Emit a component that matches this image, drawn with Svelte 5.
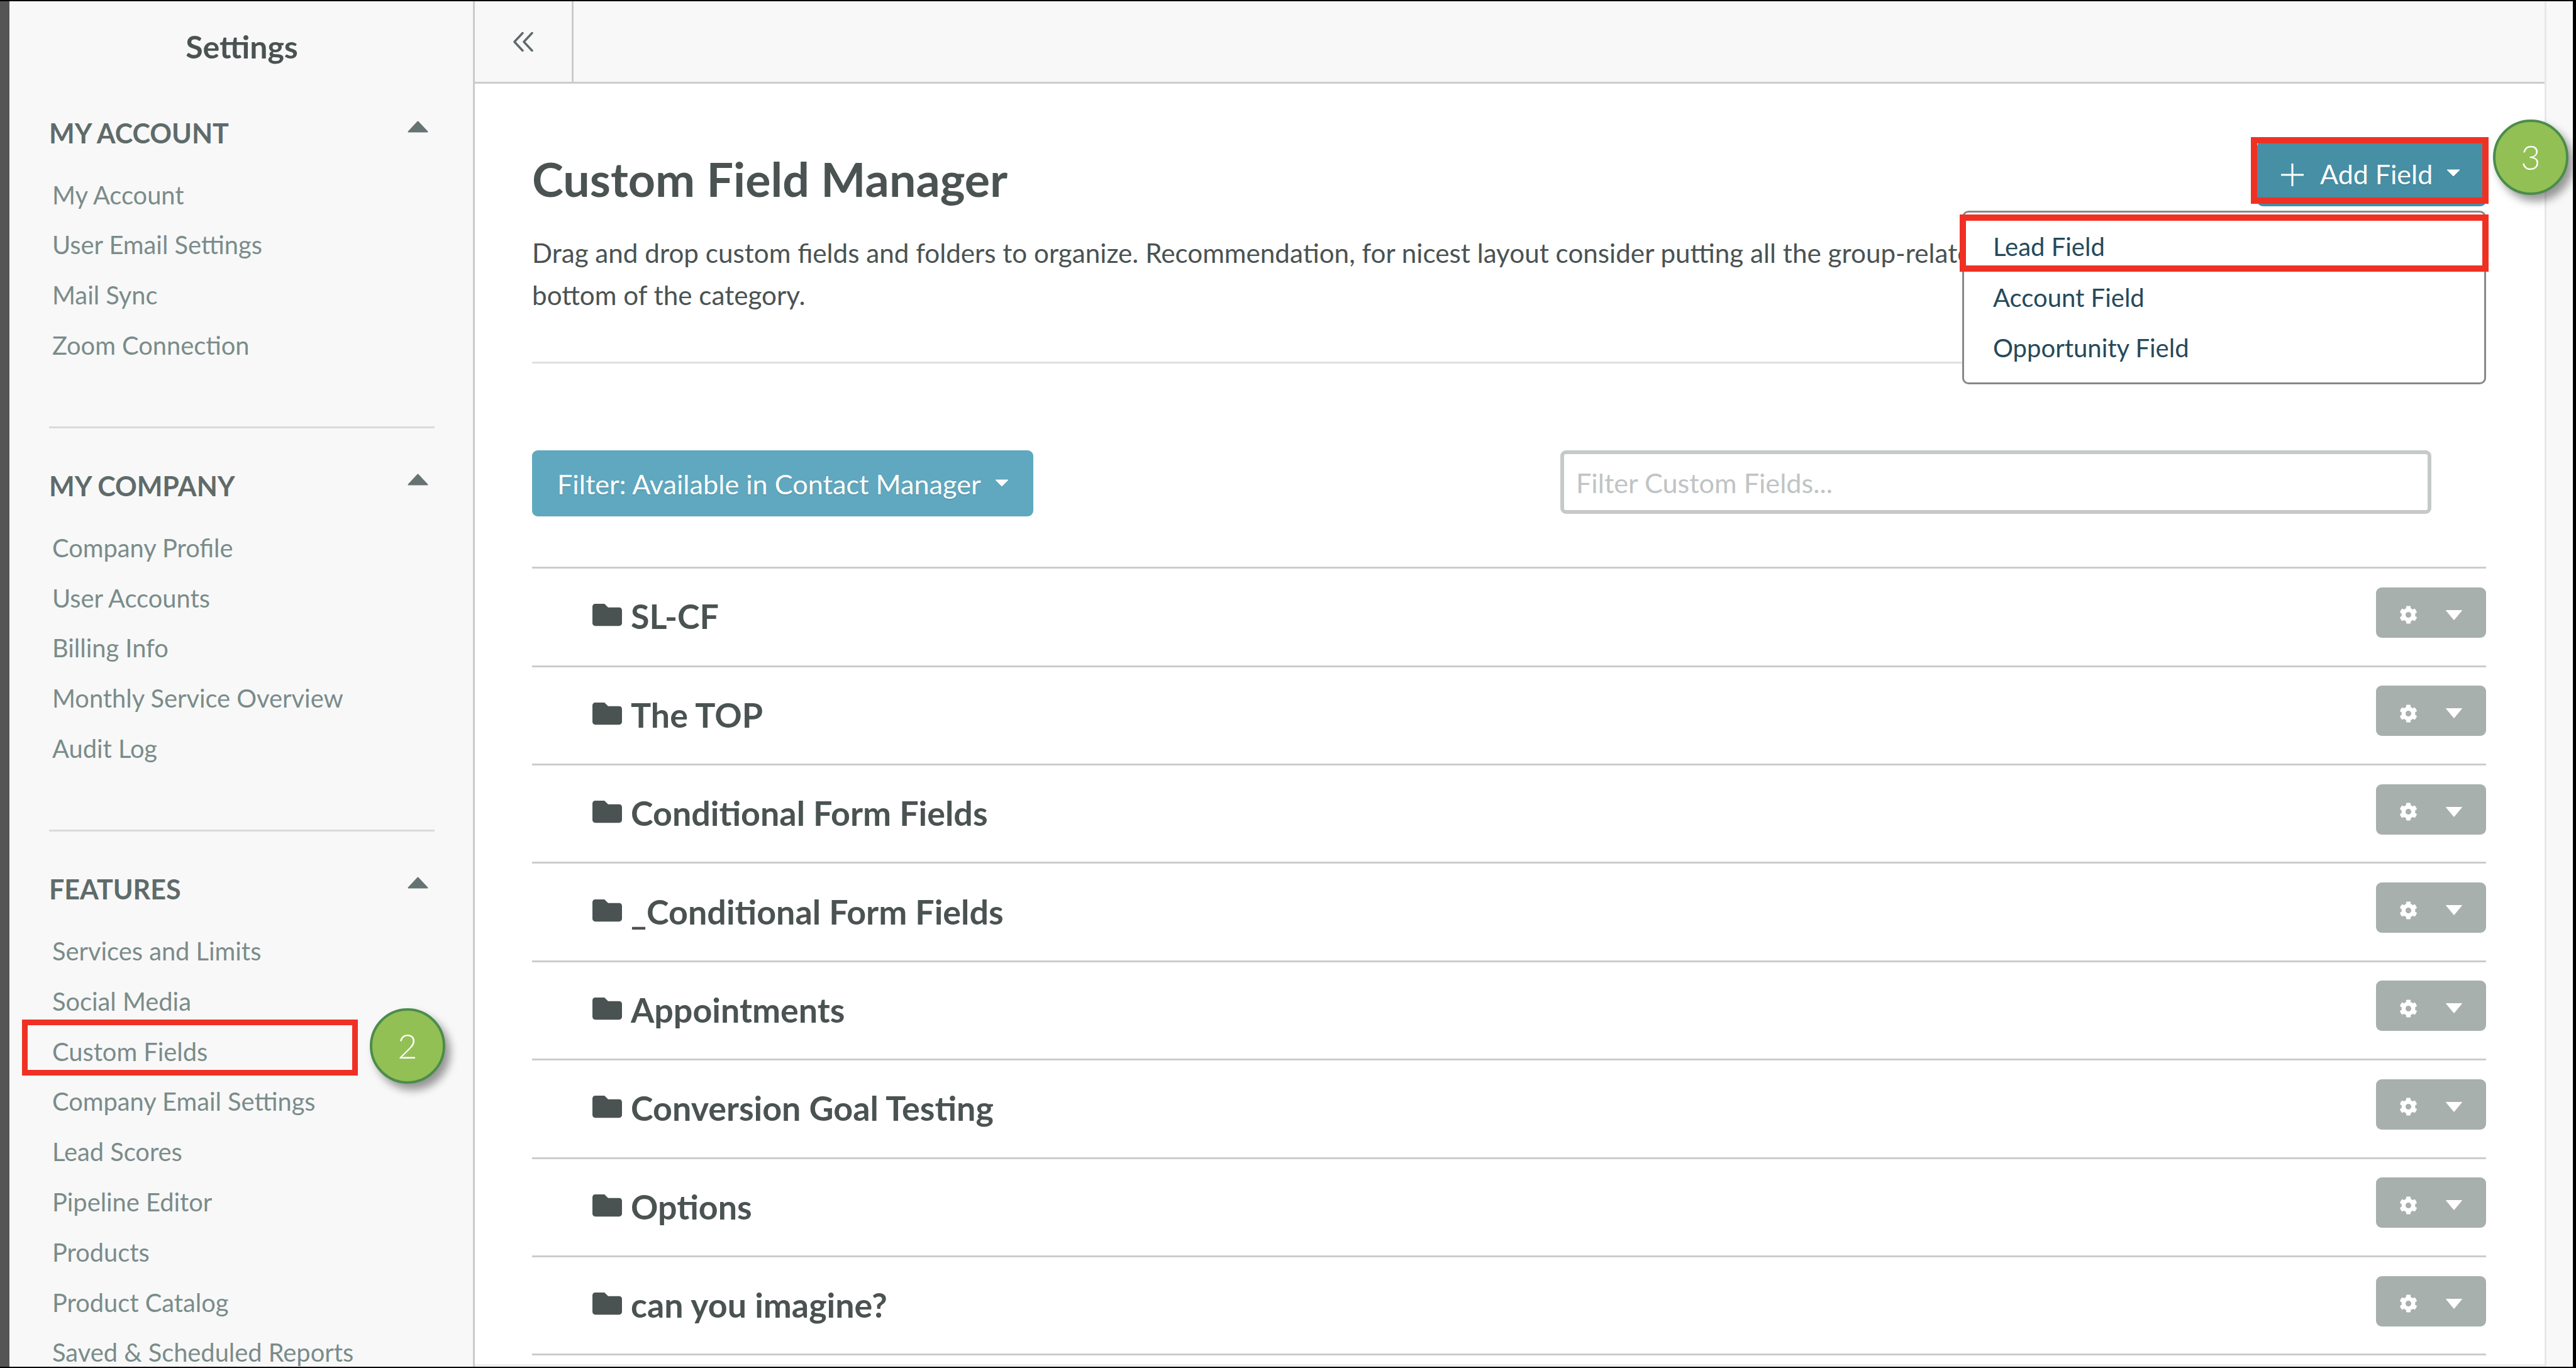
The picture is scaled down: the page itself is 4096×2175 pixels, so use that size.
<script>
  const sections = [
    { title: 'MY ACCOUNT', items: ['My Account', 'User Email Settings', 'Mail Sync', 'Zoom Connection'] },
    { title: 'MY COMPANY', items: ['Company Profile', 'User Accounts', 'Billing Info', 'Monthly Service Overview', 'Audit Log'] },
    {
      title: 'FEATURES',
      items: ['Services and Limits', 'Social Media', 'Custom Fields', 'Company Email Settings', 'Lead Scores', 'Pipeline Editor', 'Products', 'Product Catalog', 'Saved & Scheduled Reports']
    }
  ];

  const folders = ['SL-CF', 'The TOP', 'Conditional Form Fields', '_Conditional Form Fields', 'Appointments', 'Conversion Goal Testing', 'Options', 'can you imagine?'];
  const addOptions = ['Lead Field', 'Account Field', 'Opportunity Field'];
</script>

<div class="app">
  <div class="rail"></div>

  <aside class="sidebar">
    <h2 class="side-title">Settings</h2>
    {#each sections as section, i}
      <section class="side-section">
        <div class="side-head">
          <span>{section.title}</span>
          <svg class="side-caret" viewBox="0 0 33 19"><path d="M16.5 1.5 L31.5 17.5 H1.5 Z" /></svg>
        </div>
        <ul>
          {#each section.items as item}
            <li>
              {item}
              {#if item === 'Custom Fields'}
                <span class="mark mark-nav"></span>
                <span class="badge badge-nav">2</span>
              {/if}
            </li>
          {/each}
        </ul>
        {#if i < sections.length - 1}
          <div class="side-rule"></div>
        {/if}
      </section>
    {/each}
  </aside>

  <main class="main">
    <div class="topbar">
      <div class="collapse">
        <svg viewBox="0 0 32 31" width="32" height="31">
          <path d="M15 1.5 L2 15.5 L15 29.5 M30 1.5 L17 15.5 L30 29.5" />
        </svg>
      </div>
    </div>

    <div class="content">
      <div class="title-row">
        <h1>Custom Field Manager</h1>
        <div class="add-wrap">
          <button class="add-btn">
            <svg class="plus" viewBox="0 0 36 36"><path d="M18 0 V36 M0 18 H36" /></svg>
            <span>Add Field</span>
            <svg class="caret" viewBox="0 0 22 12"><path d="M1 1 H21 L11 11 Z" /></svg>
          </button>
          <span class="mark mark-add"></span>
          <span class="badge badge-add">3</span>

          <div class="dropdown">
            {#each addOptions as option}
              <div class="dropdown-item">{option}</div>
            {/each}
            <span class="mark mark-lead"></span>
          </div>
        </div>
      </div>

      <p class="desc">
        Drag and drop custom fields and folders to organize. Recommendation, for nicest layout consider putting all the group-related fields at the<br />
        bottom of the category.
      </p>
      <div class="rule"></div>

      <div class="filter-row">
        <button class="filter-btn">
          <span>Filter: Available in Contact Manager</span>
          <svg class="caret" viewBox="0 0 22 12"><path d="M1 1 H21 L11 11 Z" /></svg>
        </button>
        <input class="filter-input" placeholder="Filter Custom Fields..." />
      </div>

      <div class="rows">
        {#each folders as folder}
          <div class="row">
            <svg class="folder" viewBox="0 0 512 512">
              <path d="M464 128H272l-64-64H48C21.49 64 0 85.49 0 112v288c0 26.51 21.49 48 48 48h416c26.51 0 48-21.49 48-48V176c0-26.51-21.49-48-48-48z" />
            </svg>
            <span class="row-name">{folder}</span>
            <button class="gear-btn" aria-label="Folder options">
              <svg class="gear" viewBox="0 0 512 512">
                <path d="M487.4 315.7l-42.6-24.6c4.3-23.2 4.3-47 0-70.2l42.6-24.6c4.9-2.8 7.1-8.6 5.5-14-11.1-35.6-30-67.8-54.7-94.6-3.8-4.1-10-5.1-14.8-2.3L380.8 110c-17.9-15.4-38.5-27.3-60.8-35.1V25.8c0-5.6-3.9-10.5-9.4-11.7-36.7-8.2-74.3-7.8-109.2 0-5.5 1.2-9.4 6.1-9.4 11.7V75c-22.2 7.9-42.8 19.8-60.8 35.1L88.7 85.5c-4.9-2.8-11-1.9-14.8 2.3-24.7 26.7-43.6 58.9-54.7 94.6-1.7 5.4.6 11.2 5.5 14L67.3 221c-4.3 23.2-4.3 47 0 70.2l-42.6 24.6c-4.9 2.8-7.1 8.6-5.5 14 11.1 35.6 30 67.8 54.7 94.6 3.8 4.1 10 5.1 14.8 2.3l42.6-24.6c17.9 15.4 38.5 27.3 60.8 35.1v49.2c0 5.6 3.9 10.5 9.4 11.7 36.7 8.2 74.3 7.8 109.2 0 5.5-1.2 9.4-6.1 9.4-11.7v-49.2c22.2-7.9 42.8-19.8 60.8-35.1l42.6 24.6c4.9 2.8 11 1.9 14.8-2.3 24.7-26.7 43.6-58.9 54.7-94.6 1.5-5.5-.7-11.3-5.6-14.1zM256 336c-44.1 0-80-35.9-80-80s35.9-80 80-80 80 35.9 80 80-35.9 80-80 80z" />
              </svg>
              <svg class="gear-caret" viewBox="0 0 28 18"><path d="M1.5 1.5 H26.5 L14 16.5 Z" /></svg>
            </button>
          </div>
        {/each}
      </div>
    </div>
  </main>

  <div class="gutter"></div>
</div>

<style>
  :global(body) {
    margin: 0;
    background: #fff;
  }

  .app {
    display: flex;
    width: 4096px;
    height: 2175px;
    overflow: hidden;
    box-sizing: border-box;
    border-top: 2px solid #000;
    border-bottom: 2px solid #000;
    border-right: 5px solid #000;
    font-family: Lato, "Open Sans", sans-serif;
    color: #4a5352;
  }

  .rail {
    width: 15px;
    flex: none;
    background: #555;
  }

  /* sidebar */
  .sidebar {
    width: 740px;
    flex: none;
    box-sizing: border-box;
    padding: 41px 61px 0 63px;
    background: #f8f8f8;
    border-right: 3px solid #c9cccc;
  }

  .side-title {
    margin: 0 0 77px;
    font-size: 50px;
    line-height: 62px;
    font-weight: 700;
    text-align: center;
    color: #4a5352;
  }

  .side-head {
    display: flex;
    justify-content: space-between;
    height: 60px;
    line-height: 60px;
    font-size: 43px;
    font-weight: 700;
    color: #5f6b6a;
  }

  .side-caret {
    width: 33px;
    height: 19px;
    margin: 10px 10px 0 0;
  }

  .side-caret path {
    fill: #657472;
    stroke: #657472;
    stroke-width: 2;
    stroke-linejoin: round;
  }

  ul {
    list-style: none;
    margin: 27.6px 0 0;
    padding: 0 0 0 5px;
  }

  li {
    position: relative;
    height: 79.8px;
    line-height: 79.8px;
    font-size: 39.8px;
    color: #7a8c8a;
    white-space: nowrap;
  }

  .side-rule {
    height: 3px;
    margin: 89px 0 62.5px;
    background: #d8dbdb;
  }

  /* main column */
  .main {
    flex: 1;
    min-width: 0;
    box-sizing: border-box;
    background: #fff;
    border-bottom: 4px solid #eee;
  }

  .topbar {
    display: flex;
    height: 131px;
    box-sizing: border-box;
    background: #f8f8f8;
    border-bottom: 3px solid #ccc;
  }

  .collapse {
    width: 157px;
    display: flex;
    align-items: center;
    justify-content: center;
    box-sizing: border-box;
    border-right: 3px solid #ccc;
  }

  .collapse path {
    fill: none;
    stroke: #5e6b6a;
    stroke-width: 3.5;
    stroke-linecap: round;
    stroke-linejoin: round;
  }

  .content {
    padding: 0 93px 0 91px;
  }

  .title-row {
    display: flex;
    justify-content: space-between;
    align-items: flex-end;
    padding-top: 91px;
    margin-bottom: 41px;
  }

  h1 {
    margin: 0 0 3px;
    font-size: 75.4px;
    line-height: 82px;
    font-weight: 700;
    color: #4a5352;
  }

  .add-wrap {
    position: relative;
  }

  .add-btn {
    display: flex;
    align-items: center;
    width: 364px;
    height: 104px;
    padding: 0 0 0 38px;
    box-sizing: border-box;
    border: none;
    border-radius: 9px;
    background: #468fa5;
    color: #fff;
    font: 400 43px Lato, sans-serif;
    text-shadow: 0 1px 1px rgba(0, 0, 0, 0.2);
  }

  .plus {
    width: 36px;
    height: 36px;
    margin: 4px 26px 0 0;
  }

  .plus path {
    stroke: #fff;
    stroke-width: 3;
    fill: none;
  }

  .caret {
    width: 22px;
    height: 12px;
    margin: 0 0 2px 22px;
  }

  .caret path {
    fill: #fff;
    stroke: #fff;
    stroke-width: 1;
    stroke-linejoin: round;
  }

  .dropdown {
    position: absolute;
    top: calc(100% + 7px);
    right: 0;
    width: 833px;
    padding: 14px 0 14px;
    box-sizing: border-box;
    background: #fff;
    border: 3px solid #888;
    border-radius: 10px;
  }

  .dropdown-item {
    height: 80.5px;
    line-height: 80.5px;
    padding-left: 46px;
    font-size: 40px;
    color: #254a5a;
  }

  /* red callout boxes and numbered badges */
  .mark {
    position: absolute;
    box-sizing: border-box;
    border: 10px solid #ef3124;
    pointer-events: none;
  }

  .mark-nav {
    left: -48px;
    top: -11px;
    width: 534px;
    height: 89px;
    border-width: 9px;
  }

  .mark-add {
    left: -10px;
    top: -6px;
    width: 378px;
    height: 106px;
  }

  .mark-lead {
    left: -7px;
    top: 3px;
    width: 841px;
    height: 91px;
  }

  .badge {
    position: absolute;
    width: 120px;
    height: 120px;
    box-sizing: border-box;
    display: flex;
    align-items: center;
    justify-content: center;
    border: 4px solid #4c8c4c;
    border-radius: 50%;
    background: #92c054;
    color: #fff;
    font-size: 54px;
    font-weight: 300;
    line-height: 1;
    box-shadow: 8px 10px 14px rgba(0, 0, 0, 0.4);
  }

  .badge-nav {
    left: 505px;
    top: -29px;
  }

  .badge-add {
    left: 375px;
    top: -34px;
  }

  .desc {
    margin: 0 0 73px;
    font-size: 42.2px;
    line-height: 66.6px;
    color: #4a5352;
    white-space: nowrap;
  }

  .rule {
    height: 3px;
    background: #dde1e1;
  }

  .filter-row {
    display: flex;
    justify-content: space-between;
    margin: 138px 87px 80px 0;
  }

  .filter-btn {
    display: flex;
    align-items: center;
    width: 797px;
    height: 105px;
    padding: 0 0 0 40px;
    box-sizing: border-box;
    border: none;
    border-radius: 9px;
    background: #5fa8c0;
    color: #fff;
    font: 400 43.2px Lato, sans-serif;
    text-shadow: 0 1px 1px rgba(0, 0, 0, 0.2);
  }

  .filter-input {
    width: 1385px;
    height: 101px;
    padding: 0 19px;
    box-sizing: border-box;
    border: 6px solid #c5c9c9;
    border-radius: 9px;
    background: #fff;
    font: 400 43.2px Lato, sans-serif;
    outline: none;
  }

  .filter-input::placeholder {
    color: #c0c4c4;
    opacity: 1;
  }

  .rows {
    border-bottom: 3px solid #ccc;
  }

  .row {
    display: flex;
    align-items: center;
    height: 156.4px;
    box-sizing: border-box;
    padding-left: 96px;
    border-top: 3px solid #ccc;
  }

  .folder {
    width: 47px;
    height: 47px;
    margin: -6px 14px 0 0;
    fill: #4a5352;
  }

  .row-name {
    margin-top: -3px;
    font-size: 53.8px;
    font-weight: 700;
    color: #4a5352;
  }

  .gear-btn {
    display: flex;
    align-items: center;
    gap: 44px;
    height: 80px;
    margin: 0 0 14px auto;
    padding: 8px 37px 0;
    box-sizing: border-box;
    border: none;
    border-radius: 9px;
    background: #a8b0ae;
  }

  .gear {
    width: 29px;
    height: 29px;
    fill: #fff;
  }

  .gear-caret {
    width: 28px;
    height: 18px;
    fill: #fff;
    stroke: #fff;
    stroke-linejoin: round;
  }

  .gutter {
    width: 45px;
    flex: none;
    background: #f8f8f8;
    border-left: 3px solid #e8e8e8;
    box-sizing: border-box;
  }
</style>
